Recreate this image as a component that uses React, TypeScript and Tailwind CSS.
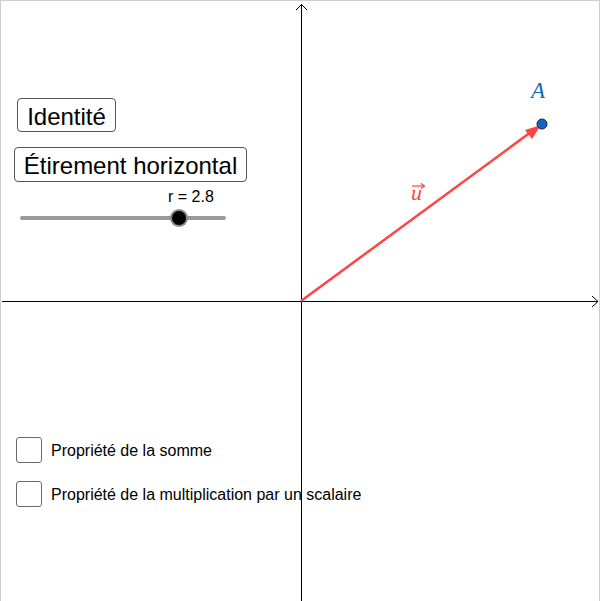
import React from 'react';

const font = { fontFamily: '"Liberation Sans", Arial, sans-serif' };

const Canvas = () => (
  <svg className="absolute inset-0" width={600} height={601} viewBox="0 0 600 601">
    {/* axes */}
    <line x1={300.5} y1={3} x2={300.5} y2={601} stroke="#000" strokeWidth={1} />
    <polyline points="295,9 300.5,3.5 306,9" fill="none" stroke="#000" strokeWidth={1} />
    <line x1={1} y1={300.5} x2={597} y2={300.5} stroke="#000" strokeWidth={1} />
    <polyline points="591,295 597,300.5 591,306" fill="none" stroke="#000" strokeWidth={1} />
    {/* vector u */}
    <line x1={300} y1={300} x2={530} y2={131} stroke="#ff4444" strokeWidth={2.5} />
    <polygon points="540,124 524,129 531,138" fill="#ff4444" />
    <text x={410} y={199} fill="#ff4444" fontSize={22} fontStyle="italic" style={{ fontFamily: '"Liberation Serif", serif' }}>u</text>
    <line x1={411} y1={185} x2={423} y2={185} stroke="#ff4444" strokeWidth={1.2} />
    <polyline points="420,182.5 423.5,185 420,187.5" fill="none" stroke="#ff4444" strokeWidth={1.2} />
    {/* point A */}
    <circle cx={541} cy={123} r={5} fill="#1565c0" stroke="#0d2a4a" strokeWidth={1} />
    <text x={530} y={97} fill="#1565c0" fontSize={23} fontStyle="italic" style={{ fontFamily: '"Liberation Serif", serif' }}>A</text>
  </svg>
);

const Button = ({ label, className }: { label: string; className: string }) => (
  <button
    className={`flex items-center justify-center rounded-[4px] border border-[#555] bg-white pt-[3px] text-[24px] leading-none text-black ${className}`}
  >
    {label}
  </button>
);

const Check = ({ label }: { label: string }) => (
  <label className="flex items-center gap-[9px]">
    <span className="block h-[26px] w-[26px] rounded-[3px] border-[1.5px] border-[#6b6b6b] bg-white" />
    <span className="pt-[2px] text-[16px] leading-none text-black">{label}</span>
  </label>
);

export default function App() {
  return (
    <div className="relative h-[601px] w-[600px] overflow-hidden border-x border-t border-[#cfcfcf] bg-white">
      <Canvas />

      {/* controls overlaid on the graphics view */}
      <div className="absolute inset-0 flex flex-col items-start pl-[13px] pt-[97px]" style={font}>
        <Button label="Identité" className="ml-[3px] h-[34px] w-[99px]" />
        <Button label="Étirement horizontal" className="mt-[15px] h-[35px] w-[233px]" />

        <div className="ml-[6px] mt-[5px] w-[206px]">
          <div className="pl-[148px] text-[16px] leading-[20px] text-black">r = 2.8</div>
          <div className="relative mt-[9px] h-[4px] rounded-full bg-[#999]">
            <div className="absolute left-[150px] top-[-7px] h-[18px] w-[18px] rounded-full bg-[#8a8a8a] p-[2px]">
              <div className="h-full w-full rounded-full bg-black" />
            </div>
          </div>
        </div>

        <div className="ml-[2px] mt-[217px] flex flex-col gap-[18px]">
          <Check label="Propriété de la somme" />
          <Check label="Propriété de la multiplication par un scalaire" />
        </div>
      </div>
    </div>
  );
}
